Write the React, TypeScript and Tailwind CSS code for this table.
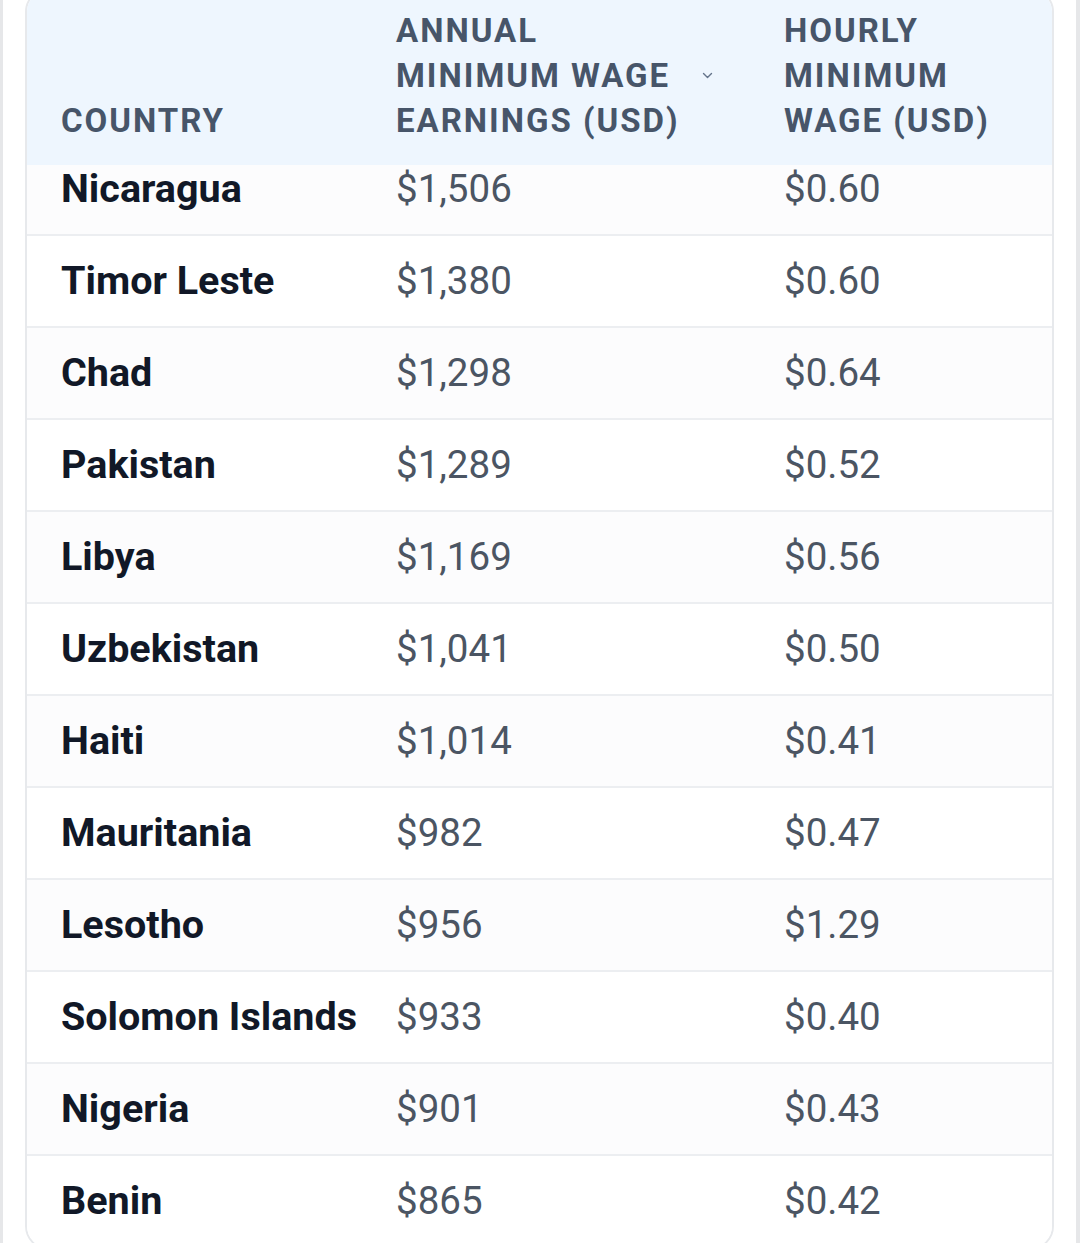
import React from 'react';

type Row = { country: string; annual: string; hourly: string };

const ROWS: Row[] = [
  { country: 'Nicaragua', annual: '$1,506', hourly: '$0.60' },
  { country: 'Timor Leste', annual: '$1,380', hourly: '$0.60' },
  { country: 'Chad', annual: '$1,298', hourly: '$0.64' },
  { country: 'Pakistan', annual: '$1,289', hourly: '$0.52' },
  { country: 'Libya', annual: '$1,169', hourly: '$0.56' },
  { country: 'Uzbekistan', annual: '$1,041', hourly: '$0.50' },
  { country: 'Haiti', annual: '$1,014', hourly: '$0.41' },
  { country: 'Mauritania', annual: '$982', hourly: '$0.47' },
  { country: 'Lesotho', annual: '$956', hourly: '$1.29' },
  { country: 'Solomon Islands', annual: '$933', hourly: '$0.40' },
  { country: 'Nigeria', annual: '$901', hourly: '$0.43' },
  { country: 'Benin', annual: '$865', hourly: '$0.42' },
];

const cols = 'grid grid-cols-[335px_388px_1fr]';

const App: React.FC = () => {
  return (
    <div className="h-[1243px] w-[1080px] overflow-hidden bg-white flex font-['Roboto','Liberation_Sans',sans-serif]">
      <div className="w-[3px] bg-[#e6e7e9]" />
      <div className="flex-1 px-[22px]">
        <div className="-mt-[12px] rounded-[24px] border-2 border-[#e7e9ec] overflow-hidden bg-white">
          <div className={`${cols} relative z-10 bg-[#eef6fe] pt-[18px] pb-[22px] items-end text-[33px] leading-[45px] font-bold tracking-[0.06em] text-[#475569]`}>
            <div className="pl-[34px]">COUNTRY</div>
            <div className="pl-[34px] flex items-center">
              <span>
                ANNUAL
                <br />
                MINIMUM WAGE
                <br />
                EARNINGS (USD)
              </span>
              <svg className="ml-[23px] w-[11px] h-[7px] text-[#64748b]" viewBox="0 0 11 7" fill="none">
                <path d="M1.5 1.5l4 4 4-4" stroke="currentColor" strokeWidth="1.4" strokeLinecap="round" strokeLinejoin="round" />
              </svg>
            </div>
            <div className="pl-[34px]">
              HOURLY
              <br />
              MINIMUM
              <br />
              WAGE (USD)
            </div>
          </div>
          <div className="-mt-[21px]">
            {ROWS.map((r, i) => (
              <div
                key={r.country}
                className={`${cols} h-[92px] items-center border-b-2 border-[#eceef1] text-[38.5px] ${i % 2 === 0 ? 'bg-[#fcfcfd]' : 'bg-white'}`}
              >
                <div className="pl-[34px] text-[39.5px] font-bold text-[#111827] whitespace-nowrap">{r.country}</div>
                <div className="pl-[34px] text-[#4b5563]">{r.annual}</div>
                <div className="pl-[34px] text-[#4b5563]">{r.hourly}</div>
              </div>
            ))}
          </div>
        </div>
      </div>
      <div className="w-[4px] bg-[#e6e7e9]" />
    </div>
  );
};

export default App;
